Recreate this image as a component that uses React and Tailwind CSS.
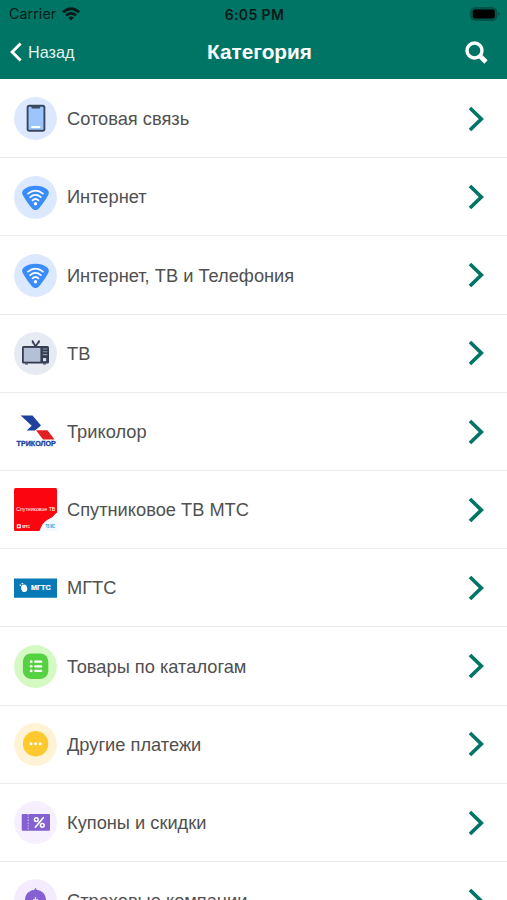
function Disc({ color, children }) {
  return (
    <svg viewBox="0 0 43 43" className="h-[43px] w-[43px]" fill="none">
      <circle cx="21.5" cy="21.5" r="21.4" fill={color} />
      {children}
    </svg>
  );
}

function PhoneIcon() {
  return (
    <Disc color="#dbe8fd">
      <rect x="13.6" y="8.7" width="16.8" height="25" rx="1.8" fill="#9cc6fb" stroke="#3a475c" strokeWidth="1.9" />
      <path d="M17 9h9.600l-.9 2.600h-7.800z" fill="#3a475c" />
      <path d="M18 30h7.500" stroke="#fff" strokeWidth="1.800" strokeLinecap="round" />
    </Disc>
  );
}

function InternetIcon() {
  return (
    <Disc color="#dbe8fe">
      <path d="M10 13.200C16 8.600 27 8.600 33 13.200c2.200 2 2.400 4 1 6.200-2.600 4.600-5.800 9-8.700 12.600-2.400 2.700-5.200 2.700-7.600 0C14.800 28.400 11.600 24 9 19.400c-1.400-2.200-1.200-4.200 1-6.200z" fill="#3b8cfb" />
      <path d="M14 17.700q7.500-6.200 15 0M16.200 21.100q5.300-4.500 10.600 0M18.500 24.300q3-2.600 6 0" stroke="#fff" strokeWidth="1.700" strokeLinecap="round" />
      <circle cx="21.500" cy="27.700" r="1.700" fill="#fff" />
    </Disc>
  );
}

function TvIcon() {
  return (
    <Disc color="#e5eaf3">
      <path d="M18.200 8.500l3.300 6L25.500 8.500M20 11l-2-.6M23.500 11l2-.8" stroke="#353e50" strokeWidth="1.700" />
      <rect x="8" y="14" width="27" height="17.600" rx="1.500" fill="#353e50" />
      <rect x="9.800" y="15.900" width="16.600" height="13.800" fill="#b3c0d5" />
      <path d="M28.800 17h4.500M28.800 19.800h4.500M28.800 22.600h4.500" stroke="#8d9ab0" strokeWidth="1.100" />
      <rect x="29" y="26" width="3.200" height="3.200" fill="#d3dceb" />
      <path d="M11 32h3M29 32h3" stroke="#353e50" strokeWidth="1.200" />
    </Disc>
  );
}

function TricolorIcon() {
  return (
    <svg viewBox="0 0 43 43" className="h-[43px] w-[43px]">
      <path d="M6.700 5.600h11.800L27 15.600l-6 4.800h-8.300l5-4.600z" fill="#2141a0" />
      <path d="M22 20.300h11.500l7 9.200H29z" fill="#e02022" />
      <text x="2.600" y="36.400" textLength="39.200" lengthAdjust="spacingAndGlyphs" fontSize="6.600" fontWeight="700" fill="#2141a0" stroke="#2141a0" strokeWidth=".3">ТРИКОЛОР</text>
    </svg>
  );
}

function MtsIcon() {
  return (
    <svg viewBox="0 0 43 43" className="h-[43px] w-[43px]">
      <path d="M1.500 0h40Q43 0 43 1.500V24.500L25.500 43H1.500Q0 43 0 41.500v-40Q0 0 1.500 0z" fill="#fb0610" />
      <path d="M43 24.500Q39.500 29 34 31.500T25.500 43H43z" fill="#f6f9fb" />
      <text x="2.300" y="23.400" textLength="39" lengthAdjust="spacingAndGlyphs" fontSize="5.600" fill="#fff">Спутниковое ТВ</text>
      <rect x="2.800" y="36.300" width="4" height="4" fill="#fff" />
      <circle cx="4.800" cy="38.300" r="1.100" fill="#fb0610" />
      <text x="8.300" y="40" textLength="7.800" lengthAdjust="spacingAndGlyphs" fontSize="4.200" fontWeight="700" fill="#fff">МТС</text>
      <text x="31.500" y="40.200" textLength="9.500" lengthAdjust="spacingAndGlyphs" fontSize="4.600" fontWeight="700" fill="#2a9fd0">ТВ МС</text>
    </svg>
  );
}

function MgtsIcon() {
  return (
    <svg viewBox="0 0 43 43" className="h-[43px] w-[43px]">
      <path d="M0 11.500h43v19.300H0z" fill="#0879b7" />
      <ellipse cx="10.200" cy="21.300" rx="3" ry="3.700" fill="#fff" transform="rotate(-12 10.200 21.300)" />
      <circle cx="6.300" cy="18.200" r=".8" fill="#fff" />
      <circle cx="8.400" cy="16.600" r=".9" fill="#fff" />
      <text x="17" y="23.400" textLength="19.700" lengthAdjust="spacingAndGlyphs" fontSize="6.800" fontWeight="700" fill="#fff" stroke="#fff" strokeWidth=".2">МГТС</text>
    </svg>
  );
}

function CatalogIcon() {
  return (
    <Disc color="#d5f9c3">
      <rect x="8.900" y="8.500" width="25.400" height="25.400" rx="8" fill="#56d142" />
      <path d="M21.200 16.700h6M21.200 21.300h6M21.200 25.900h6" stroke="#fff" strokeWidth="2.300" strokeLinecap="round" />
      <circle cx="17.200" cy="16.700" r="1.400" fill="#fff" />
      <circle cx="17.200" cy="21.300" r="1.400" fill="#fff" />
      <circle cx="17.200" cy="25.900" r="1.400" fill="#fff" />
    </Disc>
  );
}

function OtherIcon() {
  return (
    <Disc color="#fff3d6">
      <circle cx="21.600" cy="20.800" r="12.700" fill="#fec92e" />
      <circle cx="17" cy="20.800" r="1.500" fill="#fff" />
      <circle cx="21.600" cy="20.800" r="1.500" fill="#fff" />
      <circle cx="26.200" cy="20.800" r="1.500" fill="#fff" />
    </Disc>
  );
}

function CouponIcon() {
  return (
    <Disc color="#f6effe">
      <rect x="7.700" y="12.900" width="28.300" height="16.800" rx="1.200" fill="#8460d2" />
      <path d="M14.200 13v16.600" stroke="#d9c9f5" strokeWidth="1.100" strokeDasharray="1.300 1.500" />
      <path d="M29.300 16.700l-8 9.500" stroke="#fff" strokeWidth="1.600" strokeLinecap="round" />
      <circle cx="22.300" cy="18.600" r="1.900" stroke="#fff" strokeWidth="1.500" />
      <circle cx="28.300" cy="24.300" r="1.900" stroke="#fff" strokeWidth="1.500" />
    </Disc>
  );
}

function InsuranceIcon() {
  return (
    <Disc color="#f4ecfe">
      <path d="M21.500 8.700l1.400 2.300C28.500 11.600 32 15.500 32 21.500H11c0-6 3.500-9.900 9.100-10.500z" fill="#8460d2" />
      <path d="M21.500 18v5M19 20.600h5" stroke="#e6d7fb" strokeWidth="1.200" />
    </Disc>
  );
}

const categories = [
  { title: 'Сотовая связь', Icon: PhoneIcon },
  { title: 'Интернет', Icon: InternetIcon },
  { title: 'Интернет, ТВ и Телефония', Icon: InternetIcon },
  { title: 'ТВ', Icon: TvIcon },
  { title: 'Триколор', Icon: TricolorIcon },
  { title: 'Спутниковое ТВ МТС', Icon: MtsIcon },
  { title: 'МГТС', Icon: MgtsIcon },
  { title: 'Товары по каталогам', Icon: CatalogIcon },
  { title: 'Другие платежи', Icon: OtherIcon },
  { title: 'Купоны и скидки', Icon: CouponIcon },
  { title: 'Страховые компании', Icon: InsuranceIcon },
];

function StatusBar() {
  return (
    <div className="grid h-[28px] grid-cols-[1fr_auto_1fr] items-center pr-[7px] pl-[9px] font-[Inter,sans-serif] text-[#061a17]">
      <div className="flex items-center gap-[6px]">
        <span className="text-[14.200px] tracking-[0.100px]">Carrier</span>
        <svg viewBox="0 0 18 14" className="h-[14px] w-[18px]" fill="none" stroke="currentColor" strokeWidth="2.800">
          <path d="M.9 5.200q8.100-7 16.200 0M4 8.500q5-4.200 10 0" />
          <path d="M6.200 10.600q2.800-2.200 5.600 0L9 13.500z" fill="currentColor" stroke="none" />
        </svg>
      </div>
      <span className="text-center text-[14px] font-semibold tracking-[0.400px]">6:05 PM</span>
      <svg viewBox="0 0 30 14" className="h-[14px] w-[30px] justify-self-end">
        <rect x=".7" y=".7" width="26" height="12.600" rx="4" fill="#00594f" stroke="#034c42" />
        <rect x="2.800" y="2.500" width="22" height="9" rx="2.200" fill="#000" />
        <path d="M28 5v4q1.500-.5 1.500-2T28 5z" fill="#034c42" />
      </svg>
    </div>
  );
}

export default function App() {
  return (
    <div className="h-[900px] w-[507px] overflow-hidden bg-white font-['Liberation_Sans',Arial,sans-serif]">
      <header className="h-[79px] bg-[#007566]">
        <StatusBar />
        <div className="flex h-[48px] items-center pr-[19px] pl-[10px] text-white">
          <button className="flex w-[197px] items-center gap-[6px] text-[16.200px] text-[#e5f2f0]">
            <svg viewBox="0 0 12 20" className="h-[20px] w-[12px]" fill="none" stroke="#fff" strokeWidth="3">
              <path d="M10.600 1.500L2.200 10l8.400 8.500" />
            </svg>
            Назад
          </button>
          <h1 className="flex-1 text-[20.800px] font-bold">Категория</h1>
          <svg viewBox="0 0 23 23" className="h-[23px] w-[23px]" fill="none" stroke="currentColor">
            <circle cx="9.500" cy="9.500" r="7.500" strokeWidth="3.400" />
            <path d="M15 15l6 6" strokeWidth="4.600" />
          </svg>
        </div>
      </header>

      <ul className="pt-px">
        {categories.map(({ title, Icon }) => (
          <li key={title} className="flex h-[78.200px] items-center border-b border-[#ebebeb] pt-[0.600px] pr-[23px] pl-[14px]">
            <Icon />
            <span className="ml-[10px] flex-1 text-[18.260px] text-[#505050]">{title}</span>
            <svg viewBox="0 0 16 26" className="h-[26px] w-[16px]" fill="none" stroke="#007566" strokeWidth="3.700">
              <path d="M2 2l11.300 11L2 24" />
            </svg>
          </li>
        ))}
      </ul>
    </div>
  );
}
